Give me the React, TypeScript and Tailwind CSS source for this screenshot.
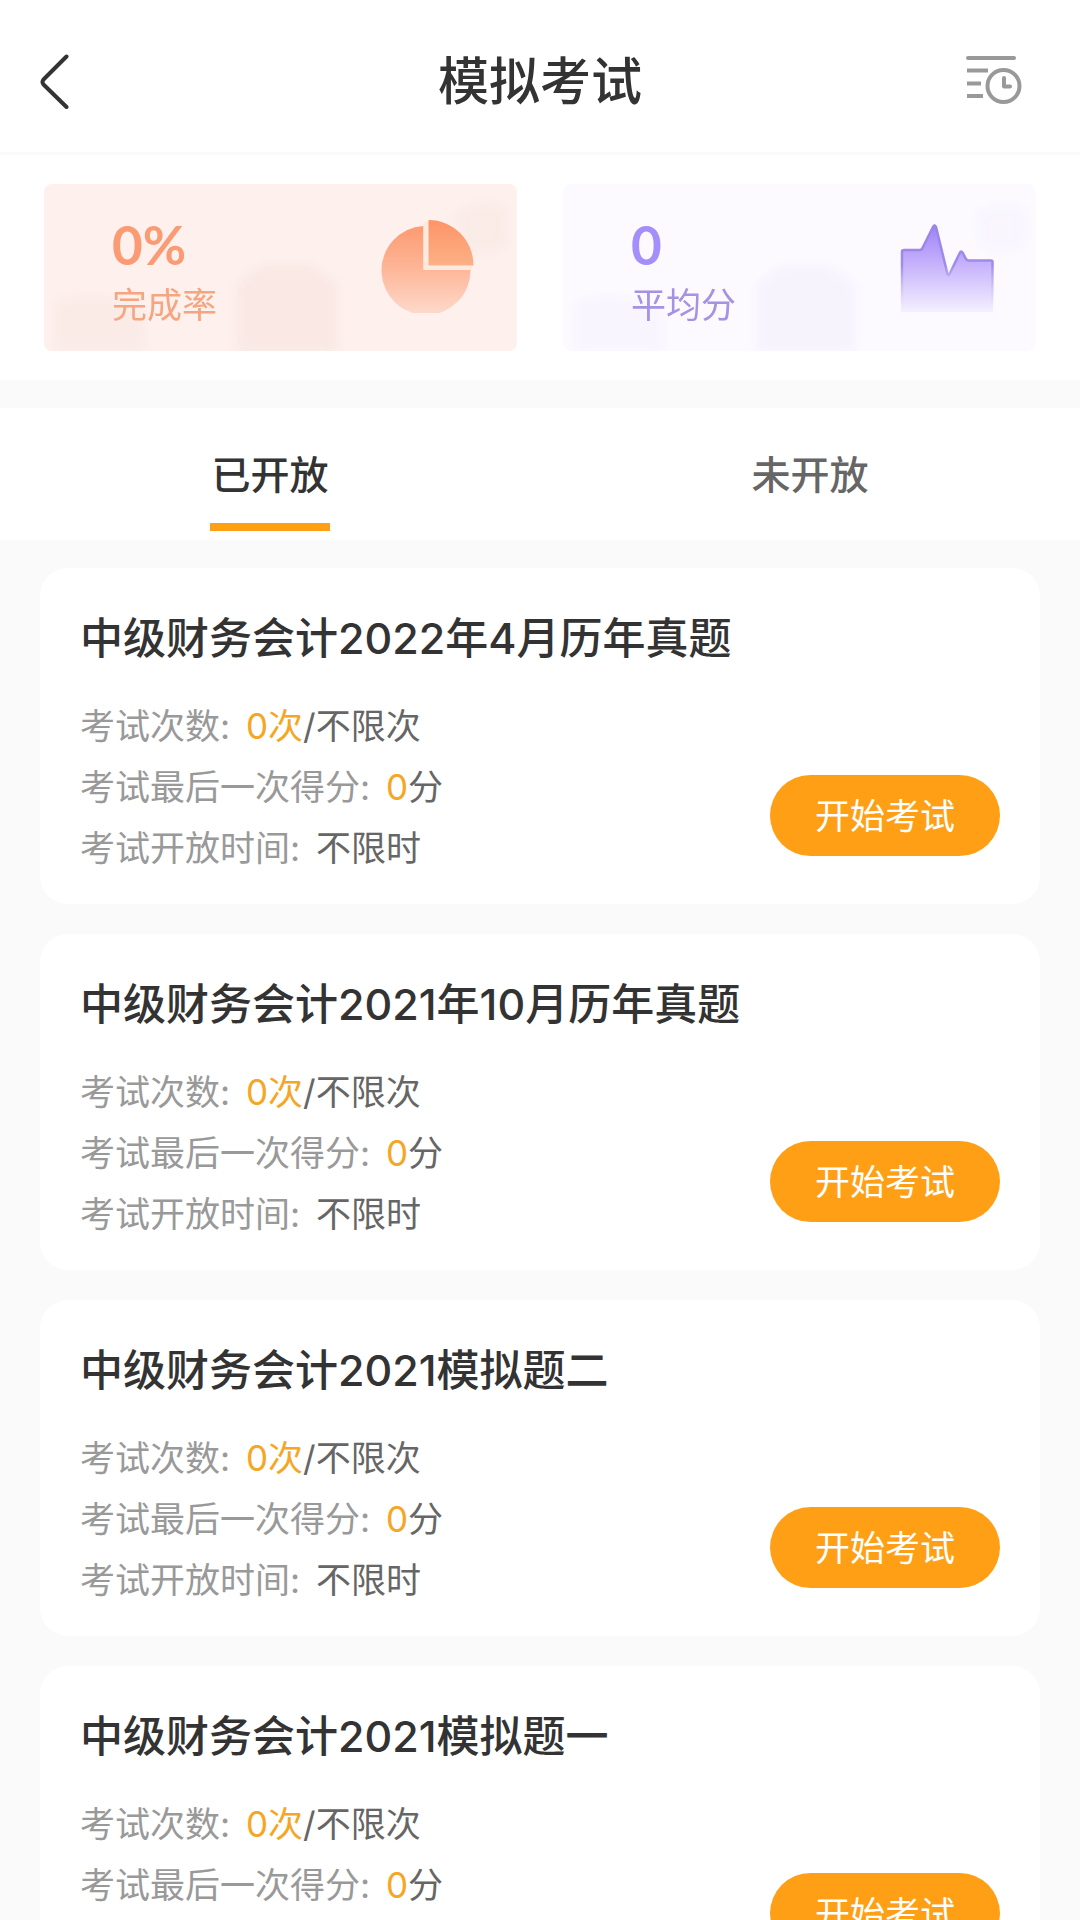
import React, { useState } from 'react';

interface Exam {
  id: number;
  title: string;
  taken: number;
  lastScore: number;
}

const EXAMS: Exam[] = [
  { id: 1, title: '中级财务会计2022年4月历年真题', taken: 0, lastScore: 0 },
  { id: 2, title: '中级财务会计2021年10月历年真题', taken: 0, lastScore: 0 },
  { id: 3, title: '中级财务会计2021模拟题二', taken: 0, lastScore: 0 },
  { id: 4, title: '中级财务会计2021模拟题一', taken: 0, lastScore: 0 },
];

const TABS = ['已开放', '未开放'];

const BackIcon = () => (
  <svg className="w-8 h-15" viewBox="0 0 32 60" fill="none" stroke="#333" strokeWidth="4" strokeLinecap="round" strokeLinejoin="round">
    <path d="M26.500 4.500 L3.500 27.500 Q1.500 30 3.500 32.500 L26.500 55" />
  </svg>
);

const HistoryIcon = () => (
  <svg className="w-14 h-[54px]" viewBox="0 0 56 54" fill="none" stroke="#999" strokeWidth="4">
    <path d="M2 3 H48" strokeLinecap="round" />
    <path d="M1 15.500 H22 M1 28.500 H15 M1 41 H17" />
    <circle cx="37.500" cy="31" r="16" />
    <path d="M38 23 V31.500 H44" strokeLinecap="round" strokeLinejoin="round" />
  </svg>
);

const PieIcon = () => (
  <svg className="w-[94px] h-24" viewBox="0 0 94 96">
    <defs>
      <linearGradient id="pieBase" x1="0" y1="0" x2="0" y2="1">
        <stop offset="0%" stopColor="#fd9a72" />
        <stop offset="45%" stopColor="#fdb495" />
        <stop offset="100%" stopColor="#fddacc" />
      </linearGradient>
      <linearGradient id="pieSlice" x1="0" y1="0" x2="0" y2="1">
        <stop offset="0%" stopColor="#fd9468" />
        <stop offset="100%" stopColor="#fdb086" />
      </linearGradient>
    </defs>
    <path d="M42.500 9 A44.500 44.500 0 1 0 89.500 53 H42.500 Z" fill="url(#pieBase)" />
    <path d="M42.500 5 H47.500 V48.500 H91 V53 H42.500 Z" fill="#fdeadf" />
    <path d="M47.500 3 A45 45.500 0 0 1 92.500 48.500 H47.500 Z" fill="url(#pieSlice)" />
  </svg>
);

const ChartIcon = () => (
  <svg className="w-[94px] h-24" viewBox="0 0 94 96">
    <defs>
      <linearGradient id="waveFill" x1="0" y1="0" x2="0" y2="1">
        <stop offset="0%" stopColor="#9b83f3" />
        <stop offset="35%" stopColor="#bda6fb" />
        <stop offset="100%" stopColor="#f4f0ff" />
      </linearGradient>
      <linearGradient id="waveLine" gradientUnits="userSpaceOnUse" x1="0" y1="8" x2="0" y2="88">
        <stop offset="0%" stopColor="#9a83ee" />
        <stop offset="50%" stopColor="#a08be9" />
        <stop offset="100%" stopColor="#e6defd" stopOpacity={0.2} />
      </linearGradient>
    </defs>
    <path d="M1 95 V33 H20 Q22 33 23 30 L33 9 Q34.500 6 36 9 L48.500 58 L60 35 Q61 33 62.500 35 L67 43.500 H93 V95 Z" fill="url(#waveFill)" />
    <path
      d="M2 88 V35 Q2 33 4 33 H20 Q22 33 23 30 L33 10 Q34.500 7 36 10 L47.500 57 Q48.500 59 49.500 57 L60 35.500 Q61 33.500 62.500 35.500 L66 42 Q67 43.500 69 43.500 H91 Q92.500 43.500 92.500 45 V88"
      fill="none"
      stroke="url(#waveLine)"
      strokeWidth="2.500"
    />
  </svg>
);

// Faint skyline shapes behind the stat numbers
const Skyline = ({ className }: { className: string }) => (
  <svg className={`absolute inset-0 w-full h-full ${className}`} viewBox="0 0 473 167" preserveAspectRatio="none" fill="currentColor" aria-hidden="true">
    <defs>
      <filter id="soft" x="-20%" y="-20%" width="140%" height="140%">
        <feGaussianBlur stdDeviation="5" />
      </filter>
    </defs>
    <g filter="url(#soft)">
      <path d="M12 167 V120 Q50 100 100 130 V167 Z" opacity="0.6" />
      <path d="M194 167 V100 L220 82 H266 L292 100 V167 Z" opacity="0.9" />
      <path d="M412 30 Q435 14 462 24 V60 Q440 76 418 62 Z" opacity="0.5" />
    </g>
  </svg>
);

const ExamCard: React.FC<{ exam: Exam }> = ({ exam }) => (
  <li className="bg-white rounded-[28px] px-10 pt-10 pb-[25px]">
    <h2 className="text-[43px] leading-[60px] font-medium text-[#333]">{exam.title}</h2>
    <div className="mt-7 flex items-end justify-between">
      <div className="text-[35px] leading-[61px] text-[#666]">
        <p>
          <span className="mr-1.5 text-[#999]">考试次数: </span>
          <span className="text-[#f5a623]">{exam.taken}次</span>/不限次
        </p>
        <p>
          <span className="mr-1.5 text-[#999]">考试最后一次得分: </span>
          <span className="text-[#f5a623]">{exam.lastScore}</span>分
        </p>
        <p>
          <span className="mr-1.5 text-[#999]">考试开放时间: </span>不限时
        </p>
      </div>
      <button className="mb-[23px] w-[230px] h-[81px] rounded-full bg-[#ff9f15] text-white text-[35px] leading-[48px]">
        开始考试
      </button>
    </div>
  </li>
);

export default function App() {
  const [activeTab, setActiveTab] = useState(TABS[0]);

  return (
    <div className="min-h-screen bg-[#fbfafb] font-[Inter,'Noto_Sans_CJK_SC',sans-serif]">
      <header className="grid grid-cols-[1fr_auto_1fr] items-center bg-white border-b-3 border-[#fafafa] pt-8 pb-5">
        <button aria-label="返回" className="flex justify-self-start pl-10">
          <BackIcon />
        </button>
        <h1 className="text-[51px] leading-[100px] font-medium text-[#333]">模拟考试</h1>
        <button aria-label="考试记录" className="flex justify-self-end pr-[58px]">
          <HistoryIcon />
        </button>
      </header>

      <section className="grid grid-cols-2 gap-[46px] bg-white px-11 py-[29px]">
        <div className="relative rounded-lg bg-[#fdf0ed]">
          <Skyline className="text-[#f8e7e2]" />
          <div className="relative flex items-start justify-between pt-[33px] pb-[22px] pl-[68px] pr-[42px]">
            <div>
              <p className="font-[Lato,sans-serif] text-[53px] leading-[56px] font-bold text-[#fb9b74]">0%</p>
              <p className="mt-2 text-[35px] leading-[48px] text-[#f5a680]">完成率</p>
            </div>
            <PieIcon />
          </div>
        </div>
        <div className="relative rounded-lg bg-[#fcfaff]">
          <Skyline className="text-[#f5f2fd]" />
          <div className="relative flex items-start justify-between pt-[33px] pb-[22px] pl-[68px] pr-[42px]">
            <div>
              <p className="font-[Lato,sans-serif] text-[53px] leading-[56px] font-bold text-[#a48ffa]">0</p>
              <p className="mt-2 text-[35px] leading-[48px] text-[#a592e2]">平均分</p>
            </div>
            <ChartIcon />
          </div>
        </div>
      </section>

      <nav className="mt-7 grid grid-cols-2 bg-white">
        {TABS.map(tab => (
          <button
            key={tab}
            onClick={() => setActiveTab(tab)}
            className={`flex flex-col items-center pt-[37px] pb-[9px] text-[39px] leading-[60px] font-medium ${
              tab === activeTab ? 'text-[#333]' : 'text-[#666]'
            }`}
          >
            {tab}
            <span className={`mt-[18px] h-2 w-[120px] ${tab === activeTab ? 'bg-[#ff9f15]' : 'bg-transparent'}`} />
          </button>
        ))}
      </nav>

      <ul className="flex flex-col gap-[30px] px-10 py-7">
        {EXAMS.map(exam => (
          <ExamCard key={exam.id} exam={exam} />
        ))}
      </ul>
    </div>
  );
}
